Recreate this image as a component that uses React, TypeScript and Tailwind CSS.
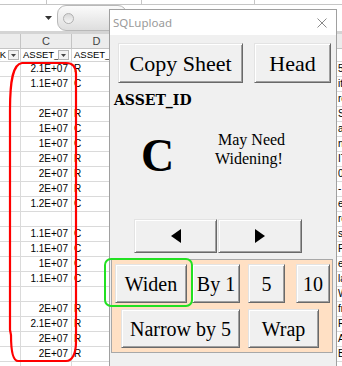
import React from "react";

type Row = { c: string; d: string; e: string };

const rows: Row[] = [
  { c: "2.1E+07", d: "R", e: "5" },
  { c: "1.1E+07", d: "C", e: "it" },
  { c: "", d: "", e: "rc" },
  { c: "2E+07", d: "R", e: "St" },
  { c: "1E+07", d: "C", e: "a" },
  { c: "1E+07", d: "C", e: "n" },
  { c: "2E+07", d: "R", e: "IT" },
  { c: "2E+07", d: "R", e: "03" },
  { c: "2E+07", d: "R", e: "-" },
  { c: "1.2E+07", d: "C", e: "e" },
  { c: "", d: "", e: "rc" },
  { c: "1.1E+07", d: "C", e: "sa" },
  { c: "1.1E+07", d: "C", e: "Pr" },
  { c: "1E+07", d: "C", e: "er" },
  { c: "1.1E+07", d: "C", e: "la" },
  { c: "", d: "", e: "W" },
  { c: "2E+07", d: "R", e: "fr" },
  { c: "2.1E+07", d: "R", e: "R" },
  { c: "2E+07", d: "R", e: "A" },
  { c: "2E+07", d: "R", e: "B" },
  { c: "", d: "", e: "" },
];

function Btn({ className, children }: { className: string; children?: React.ReactNode }) {
  return (
    <div
      className={`flex items-center justify-center bg-[#f0f0f0] border border-t-[#e3e3e3] border-l-[#e3e3e3] border-r-[#696969] border-b-[#696969] shadow-[inset_1px_1px_0_#ffffff,inset_-1px_-1px_0_#a0a0a0] text-black font-['Liberation_Serif',serif] whitespace-nowrap ${className}`}
    >
      {children}
    </div>
  );
}

function Drop() {
  return (
    <div className="w-[11px] h-[10px] border border-[#b4b4b4] bg-[#f2f2f2] flex items-center justify-center">
      <svg width="5" height="3" viewBox="0 0 5 3">
        <path d="M0 0 L5 0 L2.5 3 Z" fill="#444" />
      </svg>
    </div>
  );
}

export default function App() {
  return (
    <div className="relative w-[342px] h-[366px] overflow-hidden bg-white font-['Liberation_Sans',Arial,sans-serif] text-black">
      {/* top strip */}
      <div className="h-[5px] flex border-b border-[#c6c6c6]">
        <div className="w-[47px] border-r border-[#c6c6c6]" />
        <div className="w-[95px] border-r border-[#c6c6c6]" />
        <div className="w-[113px] border-r border-[#c6c6c6]" />
      </div>
      {/* formula bar */}
      <div className="h-[26px] flex items-center">
        <div className="w-[55px] h-full flex items-center justify-end pr-[3px]">
          <svg width="7" height="4" viewBox="0 0 7 4">
            <path d="M0 0 L7 0 L3.5 4 Z" fill="#333" />
          </svg>
        </div>
        <div className="ml-[2px] w-[70px] h-[26px] rounded-[9px] border border-[#b8b8b8] bg-gradient-to-b from-[#fbfbfb] to-[#dedede] flex items-center pl-[5px]">
          <div className="w-[11px] h-[11px] rounded-full border border-[#b0b0b0] bg-gradient-to-b from-[#d8d8d8] to-[#f6f6f6]" />
        </div>
      </div>
      <div className="h-[3px] bg-[#d4d4d4]" />
      {/* column header */}
      <div className="h-[15px] flex bg-[#ececec] border-b border-[#c4c4c4] text-[11px] text-[#444] leading-[14px]">
        <div className="w-[21px] border-r border-[#c4c4c4]" />
        <div className="w-[51px] border-r border-[#c4c4c4] text-center">C</div>
        <div className="w-[50px] border-r border-[#c4c4c4] text-center">D</div>
        <div className="w-[215px] border-r border-[#c4c4c4]" />
        <div className="flex-1" />
      </div>
      {/* filter row */}
      <div className="h-[13px] flex border-b border-[#d4d4d4] text-[9.5px] leading-[12px]">
        <div className="w-[21px] border-r border-[#d4d4d4] flex items-center">
          <div className="w-[6px] overflow-hidden flex justify-end whitespace-nowrap">_K</div>
          <div className="ml-[2px]">
            <Drop />
          </div>
        </div>
        <div className="w-[51px] border-r border-[#d4d4d4] flex items-center pl-[2px]">
          <span className="w-[35px] whitespace-nowrap">ASSET_</span>
          <Drop />
        </div>
        <div className="w-[50px] border-r border-[#d4d4d4] flex items-center pl-[2px]">
          <span className="whitespace-nowrap">ASSET_</span>
        </div>
        <div className="w-[215px] border-r border-[#d4d4d4]" />
        <div className="flex-1" />
      </div>
      {/* data rows */}
      {rows.map((r, i) => (
        <div key={i} className="h-[15px] flex border-b border-[#dadada] text-[10px] leading-[14px]">
          <div className="w-[21px] border-r border-[#dadada]" />
          <div className="w-[51px] border-r border-[#dadada] text-right pr-[3px] whitespace-nowrap">{r.c}</div>
          <div className="w-[50px] border-r border-[#dadada] pl-[2px]">{r.d}</div>
          <div className="w-[215px] border-r border-[#dadada]" />
          <div className="flex-1 pl-[1px] whitespace-nowrap overflow-hidden">{r.e}</div>
        </div>
      ))}

      {/* red outline */}
      <svg className="absolute left-0 top-0 pointer-events-none" width="342" height="366" viewBox="0 0 342 366">
        <path
          d="M10 330 L10 110 C10 80 13 64 22 63 L66 63 C72 63 76 66 76 74 L76 342 C76 354 72 361 66 361 L18 361 C13 361 11 350 11 335 Z"
          fill="none"
          stroke="#ff0000"
          strokeWidth="2.2"
        />
      </svg>

      {/* dialog */}
      <div className="absolute left-[109px] top-[9px] w-[228px] h-[370px] border border-[#a0a0a0] bg-[#f0f0f0] flex flex-col">
        <div className="h-[25px] bg-white flex items-center justify-between pl-[3px] pr-[9px]">
          <span className="text-[11.5px] text-[#9a9a9a] font-['Noto_Sans',sans-serif]">SQLupload</span>
          <svg width="10" height="10" viewBox="0 0 10 10">
            <path d="M0.5 0.5 L9.5 9.5 M9.5 0.5 L0.5 9.5" stroke="#8a8a8a" strokeWidth="1" />
          </svg>
        </div>
        <div className="flex flex-col">
          <div className="flex mt-[8px] ml-[8px] gap-[11px]">
            <Btn className="w-[125px] h-[40px] text-[22px]">Copy Sheet</Btn>
            <Btn className="w-[77px] h-[40px] text-[22px]">Head</Btn>
          </div>
          <div className="mt-[9px] ml-[4px] h-[16px] leading-[16px] text-[14px] font-bold font-['DejaVu_Serif',serif]">
            ASSET_ID
          </div>
          <div className="flex items-start mt-[22px]">
            <div className="ml-[31px] mt-[3px] w-[40px] leading-[46px] text-[46px] font-bold font-['Liberation_Serif',serif]">
              C
            </div>
            <div className="ml-[34px] text-[16px] leading-[19px] font-['Liberation_Serif',serif]">
              <div className="pl-[3px]">May Need</div>
              <div>Widening!</div>
            </div>
          </div>
          <div className="flex mt-[40px] ml-[24px] gap-[1px]">
            <Btn className="w-[83px] h-[34px]">
              <svg width="10" height="14" viewBox="0 0 10 14">
                <path d="M10 0 L10 14 L0 7 Z" fill="#000" />
              </svg>
            </Btn>
            <Btn className="w-[84px] h-[34px]">
              <svg width="10" height="14" viewBox="0 0 10 14">
                <path d="M0 0 L0 14 L10 7 Z" fill="#000" />
              </svg>
            </Btn>
          </div>
          <div className="mt-[6px] ml-[1px] w-[222px] border border-[#a8a8a8] bg-[#ffe0c4] pt-[4px] pb-[4px]">
            <div className="flex">
              <Btn className="ml-[3px] w-[72px] h-[39px] text-[20px]">Widen</Btn>
              <Btn className="ml-[5px] w-[48px] h-[39px] text-[20px]">By 1</Btn>
              <Btn className="ml-[8px] w-[37px] h-[39px] text-[20px]">5</Btn>
              <Btn className="ml-[11px] w-[34px] h-[39px] text-[20px]">10</Btn>
            </div>
            <div className="flex mt-[6px]">
              <Btn className="ml-[9px] w-[119px] h-[39px] text-[20px]">Narrow by 5</Btn>
              <Btn className="ml-[8px] w-[71px] h-[39px] text-[20px]">Wrap</Btn>
            </div>
          </div>
        </div>
      </div>

      {/* green highlight */}
      <svg className="absolute left-[104px] top-[258px] pointer-events-none" width="89" height="49" viewBox="0 0 89 49">
        <rect x="1" y="1" width="87" height="47" rx="6" fill="none" stroke="#22e022" strokeWidth="2" />
      </svg>
    </div>
  );
}
